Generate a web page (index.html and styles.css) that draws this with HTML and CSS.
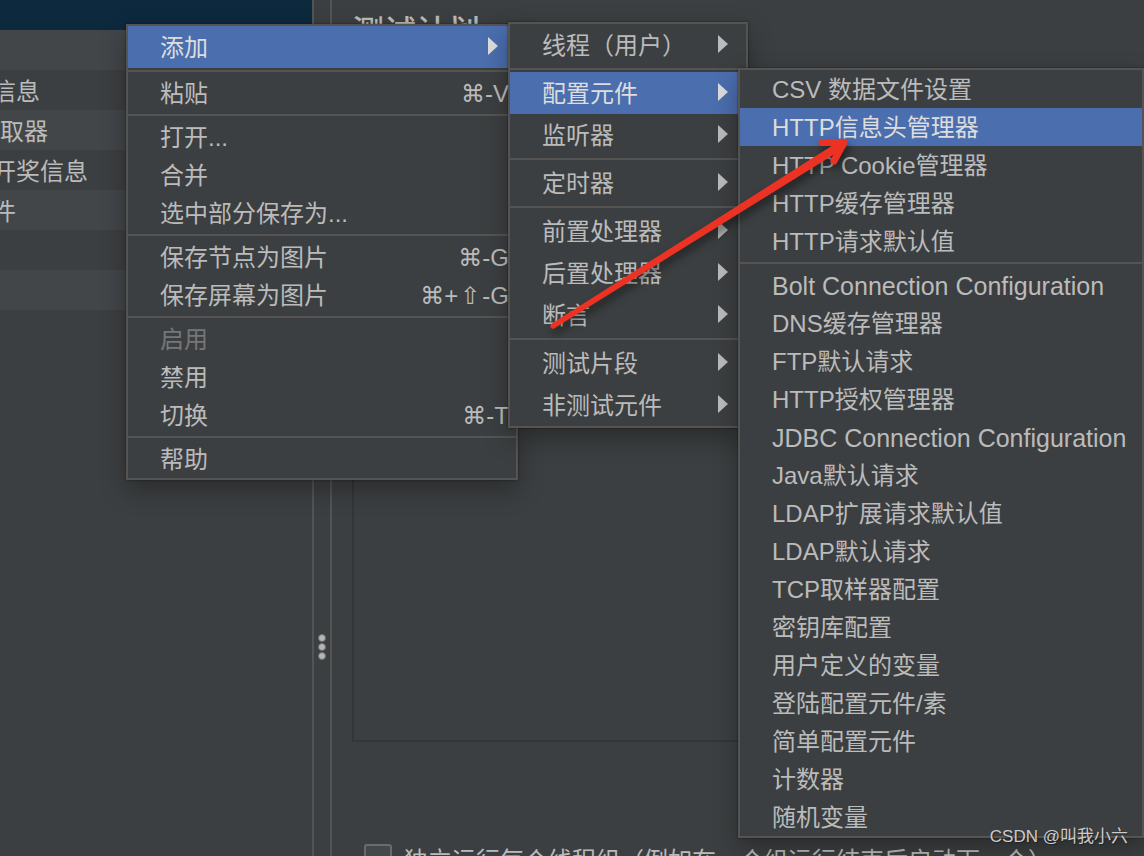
FILE: index.html
```html
<!DOCTYPE html>
<html lang="zh-CN">
<head>
<meta charset="utf-8">
<title>测试计划</title>
<link rel="stylesheet" href="styles.css">
</head>
<body>
<div class="app">
  <nav class="tree">
    <ul class="tree-list">
      <li class="tree-row root"></li>
      <li class="tree-row"></li>
      <li class="tree-row cut">信息</li>
      <li class="tree-row">取器</li>
      <li class="tree-row cut">开奖信息</li>
      <li class="tree-row cut">件</li>
      <li class="tree-row"></li>
      <li class="tree-row"></li>
    </ul>
  </nav>
  <div class="splitter"><i class="dot"></i><i class="dot"></i><i class="dot"></i></div>
  <main class="panel">
    <h1 class="title">测试计划</h1>
    <textarea class="comments" aria-label="注释"></textarea>
    <label class="option"><input class="check" type="checkbox"><span>独立运行每个线程组（例如在一个组运行结束后启动下一个）</span></label>
  </main>
</div>

<div class="menu menu-main" role="menu">
  <button class="item branch selected">添加<svg class="caret" viewBox="0 0 10 18"><path d="M0 0L10 9L0 18Z"/></svg></button>
  <hr class="sep">
  <button class="item">粘贴<kbd class="keys"><span class="sym">⌘</span>-V</kbd></button>
  <hr class="sep">
  <button class="item">打开...</button>
  <button class="item">合并</button>
  <button class="item">选中部分保存为...</button>
  <hr class="sep">
  <button class="item">保存节点为图片<kbd class="keys"><span class="sym">⌘</span>-G</kbd></button>
  <button class="item">保存屏幕为图片<kbd class="keys"><span class="sym">⌘</span>+<span class="sym">⇧</span>-G</kbd></button>
  <hr class="sep">
  <button class="item" disabled>启用</button>
  <button class="item">禁用</button>
  <button class="item">切换<kbd class="keys"><span class="sym">⌘</span>-T</kbd></button>
  <hr class="sep">
  <button class="item">帮助</button>
</div>

<div class="menu menu-add" role="menu">
  <button class="item branch">线程（用户）<svg class="caret" viewBox="0 0 10 18"><path d="M0 0L10 9L0 18Z"/></svg></button>
  <hr class="sep">
  <button class="item branch selected">配置元件<svg class="caret" viewBox="0 0 10 18"><path d="M0 0L10 9L0 18Z"/></svg></button>
  <button class="item branch">监听器<svg class="caret" viewBox="0 0 10 18"><path d="M0 0L10 9L0 18Z"/></svg></button>
  <hr class="sep">
  <button class="item branch">定时器<svg class="caret" viewBox="0 0 10 18"><path d="M0 0L10 9L0 18Z"/></svg></button>
  <hr class="sep">
  <button class="item branch">前置处理器<svg class="caret" viewBox="0 0 10 18"><path d="M0 0L10 9L0 18Z"/></svg></button>
  <button class="item branch">后置处理器<svg class="caret" viewBox="0 0 10 18"><path d="M0 0L10 9L0 18Z"/></svg></button>
  <button class="item branch">断言<svg class="caret" viewBox="0 0 10 18"><path d="M0 0L10 9L0 18Z"/></svg></button>
  <hr class="sep">
  <button class="item branch">测试片段<svg class="caret" viewBox="0 0 10 18"><path d="M0 0L10 9L0 18Z"/></svg></button>
  <button class="item branch">非测试元件<svg class="caret" viewBox="0 0 10 18"><path d="M0 0L10 9L0 18Z"/></svg></button>
</div>

<div class="menu menu-config" role="menu">
  <button class="item">CSV 数据文件设置</button>
  <button class="item selected">HTTP信息头管理器</button>
  <button class="item">HTTP Cookie管理器</button>
  <button class="item">HTTP缓存管理器</button>
  <button class="item">HTTP请求默认值</button>
  <hr class="sep">
  <button class="item latin">Bolt Connection Configuration</button>
  <button class="item">DNS缓存管理器</button>
  <button class="item">FTP默认请求</button>
  <button class="item">HTTP授权管理器</button>
  <button class="item latin">JDBC Connection Configuration</button>
  <button class="item">Java默认请求</button>
  <button class="item">LDAP扩展请求默认值</button>
  <button class="item">LDAP默认请求</button>
  <button class="item">TCP取样器配置</button>
  <button class="item">密钥库配置</button>
  <button class="item">用户定义的变量</button>
  <button class="item">登陆配置元件/素</button>
  <button class="item">简单配置元件</button>
  <button class="item">计数器</button>
  <button class="item">随机变量</button>
</div>

<svg class="pointer" viewBox="0 0 310 200" aria-hidden="true">
  <path d="M11.400 198.200L303 17L298 10L8.600 193.800A2.600 2.600 0 0 0 11.400 198.200Z"/>
  <path class="head" d="M279 12.500L301 12.500L291 31"/>
</svg>
<div class="watermark">CSDN @叫我小六</div>
</body>
</html>
```
FILE: styles.css
```css
* {
  box-sizing: border-box;
}

body {
  margin: 0;
  height: 100vh;
  overflow: hidden;
  position: relative;
  background: #3c3f41;
  color: #bbbbbb;
  font-family: "Liberation Sans", "Noto Sans CJK SC", sans-serif;
  font-size: 24px;
}

.app {
  display: flex;
  height: 100vh;
}

.tree {
  flex: 0 0 312px;
  overflow: hidden;
}

.tree-list {
  list-style: none;
  margin: 0;
  padding: 0;
}

.tree-row {
  height: 40px;
  line-height: 44px;
  white-space: nowrap;
}

.tree-row:nth-child(even) {
  background: #424648;
}

.tree-row.root {
  height: 30px;
  background: #0d293e;
}

.tree-row.cut {
  text-indent: -8px;
}

.splitter {
  flex: 0 0 20px;
  border: solid #555453;
  border-width: 0 2px;
  display: flex;
  flex-direction: column;
  align-items: center;
  gap: 1px;
  padding-top: 634px;
}

.dot {
  width: 8px;
  height: 8px;
  border: 1px solid #6c6e70;
  border-radius: 4px;
  background: #b4b5b5;
}

.panel {
  flex: 1;
  min-width: 0;
  height: calc(100vh + 16px);
  padding: 8px 20px 0;
  display: flex;
  flex-direction: column;
}

.title {
  margin: 0 0 60px;
  font-size: 32px;
  line-height: 48px;
  font-weight: 500;
}

.comments {
  flex: 1;
  margin: 0 0 102px;
  border: 2px solid #333638;
  background: transparent;
  resize: none;
}

.option {
  display: flex;
  align-items: center;
  gap: 12px;
  height: 28px;
  padding-left: 12px;
  white-space: nowrap;
}

.check {
  appearance: none;
  width: 28px;
  height: 28px;
  margin: 0;
  border: 2px solid #6b6b6b;
  border-radius: 3px;
  background: #43494a;
}

.menu {
  position: absolute;
  border: 2px solid #555453;
  background: #3c3f41;
  box-shadow: 0 0 2px rgba(0, 0, 0, 0.5), 0 10px 24px rgba(0, 0, 0, 0.3);
}

.menu-main {
  left: 126px;
  top: 24px;
  width: 392px;
}

.menu-add {
  left: 508px;
  top: 22px;
  width: 240px;
}

.menu-config {
  left: 738px;
  right: 0;
  top: 68px;
}

.item {
  display: flex;
  align-items: center;
  justify-content: space-between;
  width: 100%;
  height: 38px;
  padding: 2px 7px 0 32px;
  border: 0;
  background: transparent;
  color: inherit;
  font: inherit;
  line-height: 36px;
  text-align: left;
  white-space: nowrap;
}

.item:disabled {
  color: #777777;
}

.branch {
  height: 42px;
  padding: 2px 18px 0 32px;
}

.latin {
  font-size: 25px;
}

.selected {
  background: #4b6eaf;
  color: #dddddd;
}

.caret {
  width: 10px;
  height: 18px;
  margin-bottom: 4px;
  fill: currentColor;
}

.keys {
  display: flex;
  font: inherit;
}

.sym {
  width: 24px;
  font-family: "DejaVu Sans", sans-serif;
  text-align: center;
}

.sep {
  height: 2px;
  margin: 2px 0;
  border: 0;
  background: #555453;
}

.pointer {
  position: absolute;
  left: 543px;
  top: 130px;
  width: 310px;
  height: 200px;
  fill: #ec3323;
  filter: drop-shadow(2px 5px 4px rgba(0, 0, 0, 0.5));
  pointer-events: none;
}

.head {
  fill: none;
  stroke: #ec3323;
  stroke-width: 7px;
  stroke-linecap: round;
  stroke-linejoin: round;
}

.watermark {
  position: absolute;
  right: 16px;
  bottom: 6px;
  font-size: 17px;
  line-height: 26px;
  color: #cccccc;
  text-shadow: 1px 1px 1px #222222;
}
```
